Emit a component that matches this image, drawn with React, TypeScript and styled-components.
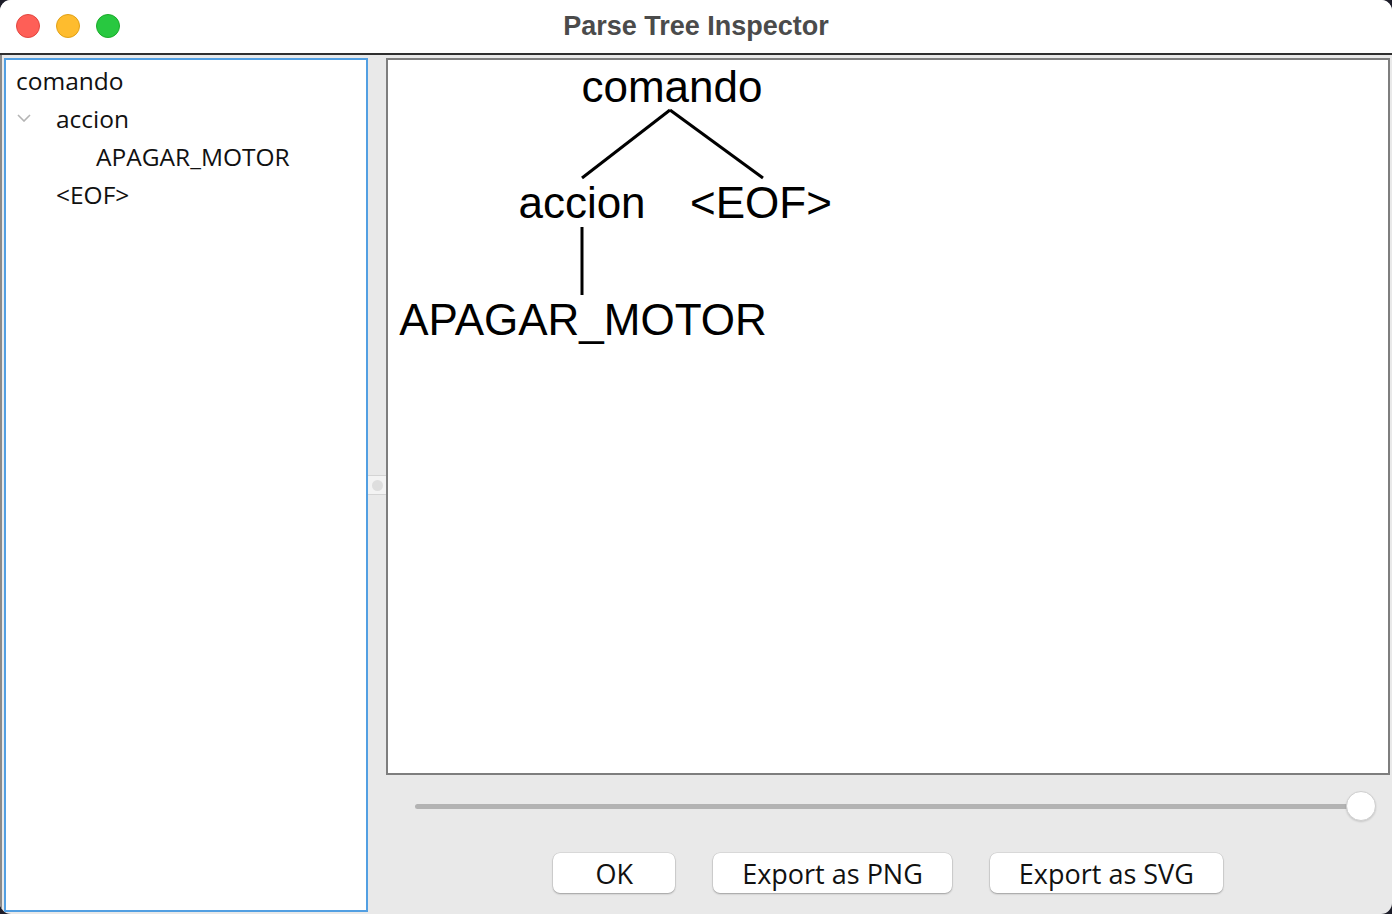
import React from 'react';
import styled, { createGlobalStyle } from 'styled-components';

const GlobalStyle = createGlobalStyle`
  html, body {
    margin: 0;
    padding: 0;
    background: #1d1d29;
  }
  * {
    box-sizing: border-box;
  }
`;

const Window = styled.div`
  width: 1392px;
  height: 914px;
  border-radius: 11px;
  overflow: hidden;
  background: #e9e9e9;
  display: flex;
  flex-direction: column;
`;

const TitleBar = styled.div`
  height: 55px;
  flex: none;
  display: grid;
  grid-template-columns: 1fr auto 1fr;
  align-items: center;
  background: #ffffff;
  border-bottom: 2px solid #2f2f2f;
  padding-bottom: 1px;
`;

const Lights = styled.div`
  display: flex;
  gap: 16px;
  padding-left: 16px;
`;

const Light = styled.div<{ $fill: string; $edge: string }>`
  width: 24px;
  height: 24px;
  border-radius: 50%;
  background: ${(p) => p.$fill};
  border: 1px solid ${(p) => p.$edge};
`;

const Title = styled.div`
  font-family: 'Liberation Sans', Arial, sans-serif;
  font-weight: 700;
  font-size: 27px;
  color: #4b4b4b;
`;

const Body = styled.div`
  flex: 1;
  display: flex;
  padding: 3px 0 2px 2px;
  border-left: 2px solid #8a8a8a;
  min-height: 0;
`;

const TreeList = styled.div`
  width: 364px;
  flex: none;
  background: #ffffff;
  border: 2px solid #529fe2;
  padding: 1px 0 0 10px;
  font-family: 'Open Sans', 'DejaVu Sans', sans-serif;
  font-size: 24.5px;
  color: #111111;
`;

const TreeRow = styled.div<{ $level: number }>`
  height: 38px;
  display: flex;
  align-items: center;
  position: relative;
  padding-left: ${(p) => p.$level * 40}px;
`;

const Toggle = styled.svg`
  position: absolute;
  left: 1px;
  top: 15px;
`;

const Divider = styled.div`
  width: 18px;
  flex: none;
  display: flex;
  align-items: center;
`;

const Knob = styled.div`
  width: 100%;
  height: 20px;
  border-top: 1px solid #d4d4d4;
  border-bottom: 1px solid #d4d4d4;
  background: #f3f3f3;
  display: flex;
  align-items: center;
  justify-content: center;
  &::after {
    content: '';
    width: 11px;
    height: 11px;
    border-radius: 50%;
    background: #dedede;
  }
`;

const RightSide = styled.div`
  flex: 1;
  display: flex;
  flex-direction: column;
  min-width: 0;
`;

const Canvas = styled.div`
  height: 717px;
  flex: none;
  margin-right: 2px;
  background: #ffffff;
  border: 2px solid #7e7e7e;
  overflow: hidden;
`;

const SliderRow = styled.div`
  height: 62px;
  flex: none;
  display: flex;
  align-items: center;
  padding: 0 31px 0 29px;
`;

const Track = styled.div`
  flex: 1;
  height: 5px;
  border-radius: 3px;
  background: #b3b3b3;
  display: flex;
  align-items: center;
  justify-content: flex-end;
`;

const Thumb = styled.div`
  width: 30px;
  height: 30px;
  flex: none;
  margin-right: -15px;
  border-radius: 50%;
  background: #ffffff;
  border: 1px solid #cfcfcf;
  box-shadow: 0 1px 2px rgba(0, 0, 0, 0.15);
`;

const ButtonRow = styled.div`
  flex: 1;
  display: flex;
  justify-content: center;
  align-items: flex-start;
  gap: 38px;
  padding: 16px 2px 0 0;
`;

const Button = styled.button`
  height: 40px;
  min-width: 122px;
  padding: 0 29px;
  border: none;
  border-radius: 7px;
  background: #ffffff;
  box-shadow: 0 0 0 0.5px rgba(0, 0, 0, 0.12), 0 1px 2px rgba(0, 0, 0, 0.28);
  font-family: 'Open Sans', 'DejaVu Sans', sans-serif;
  font-size: 27px;
  color: #111111;
`;

const TreeSvg = styled.svg`
  display: block;
  font-family: 'Liberation Sans', Arial, sans-serif;
  font-size: 44px;
`;

const treeNodes = [
  { label: 'comando', x: 284, y: 42 },
  { label: 'accion', x: 194, y: 158 },
  { label: '<EOF>', x: 373, y: 158 },
  { label: 'APAGAR_MOTOR', x: 195, y: 275 },
];

const edges = [
  [282, 50, 194, 118],
  [282, 50, 375, 118],
  [194, 167, 194, 235],
];

export default function App() {
  return (
    <>
      <GlobalStyle />
      <Window>
        <TitleBar>
          <Lights>
            <Light $fill='#fe5f57' $edge='#e2463f' />
            <Light $fill='#febc2e' $edge='#e1a116' />
            <Light $fill='#28c840' $edge='#1aab29' />
          </Lights>
          <Title>Parse Tree Inspector</Title>
          <div />
        </TitleBar>
        <Body>
          <TreeList>
            <TreeRow $level={0}>comando</TreeRow>
            <TreeRow $level={1}>
              <Toggle width='14' height='8' viewBox='0 0 14 8'>
                <path d='M1 1 L7 7 L13 1' fill='none' stroke='#b4b4b4' strokeWidth='1.6' />
              </Toggle>
              accion
            </TreeRow>
            <TreeRow $level={2}>APAGAR_MOTOR</TreeRow>
            <TreeRow $level={1}>&lt;EOF&gt;</TreeRow>
          </TreeList>
          <Divider>
            <Knob />
          </Divider>
          <RightSide>
            <Canvas>
              <TreeSvg width='520' height='320' viewBox='0 0 520 320'>
                {edges.map(([x1, y1, x2, y2], i) => (
                  <line key={i} x1={x1} y1={y1} x2={x2} y2={y2} stroke='#000' strokeWidth='3' />
                ))}
                {treeNodes.map((n) => (
                  <text key={n.label} x={n.x} y={n.y} textAnchor='middle' fill='#000'>
                    {n.label}
                  </text>
                ))}
              </TreeSvg>
            </Canvas>
            <SliderRow>
              <Track>
                <Thumb />
              </Track>
            </SliderRow>
            <ButtonRow>
              <Button>OK</Button>
              <Button>Export as PNG</Button>
              <Button>Export as SVG</Button>
            </ButtonRow>
          </RightSide>
        </Body>
      </Window>
    </>
  );
}
